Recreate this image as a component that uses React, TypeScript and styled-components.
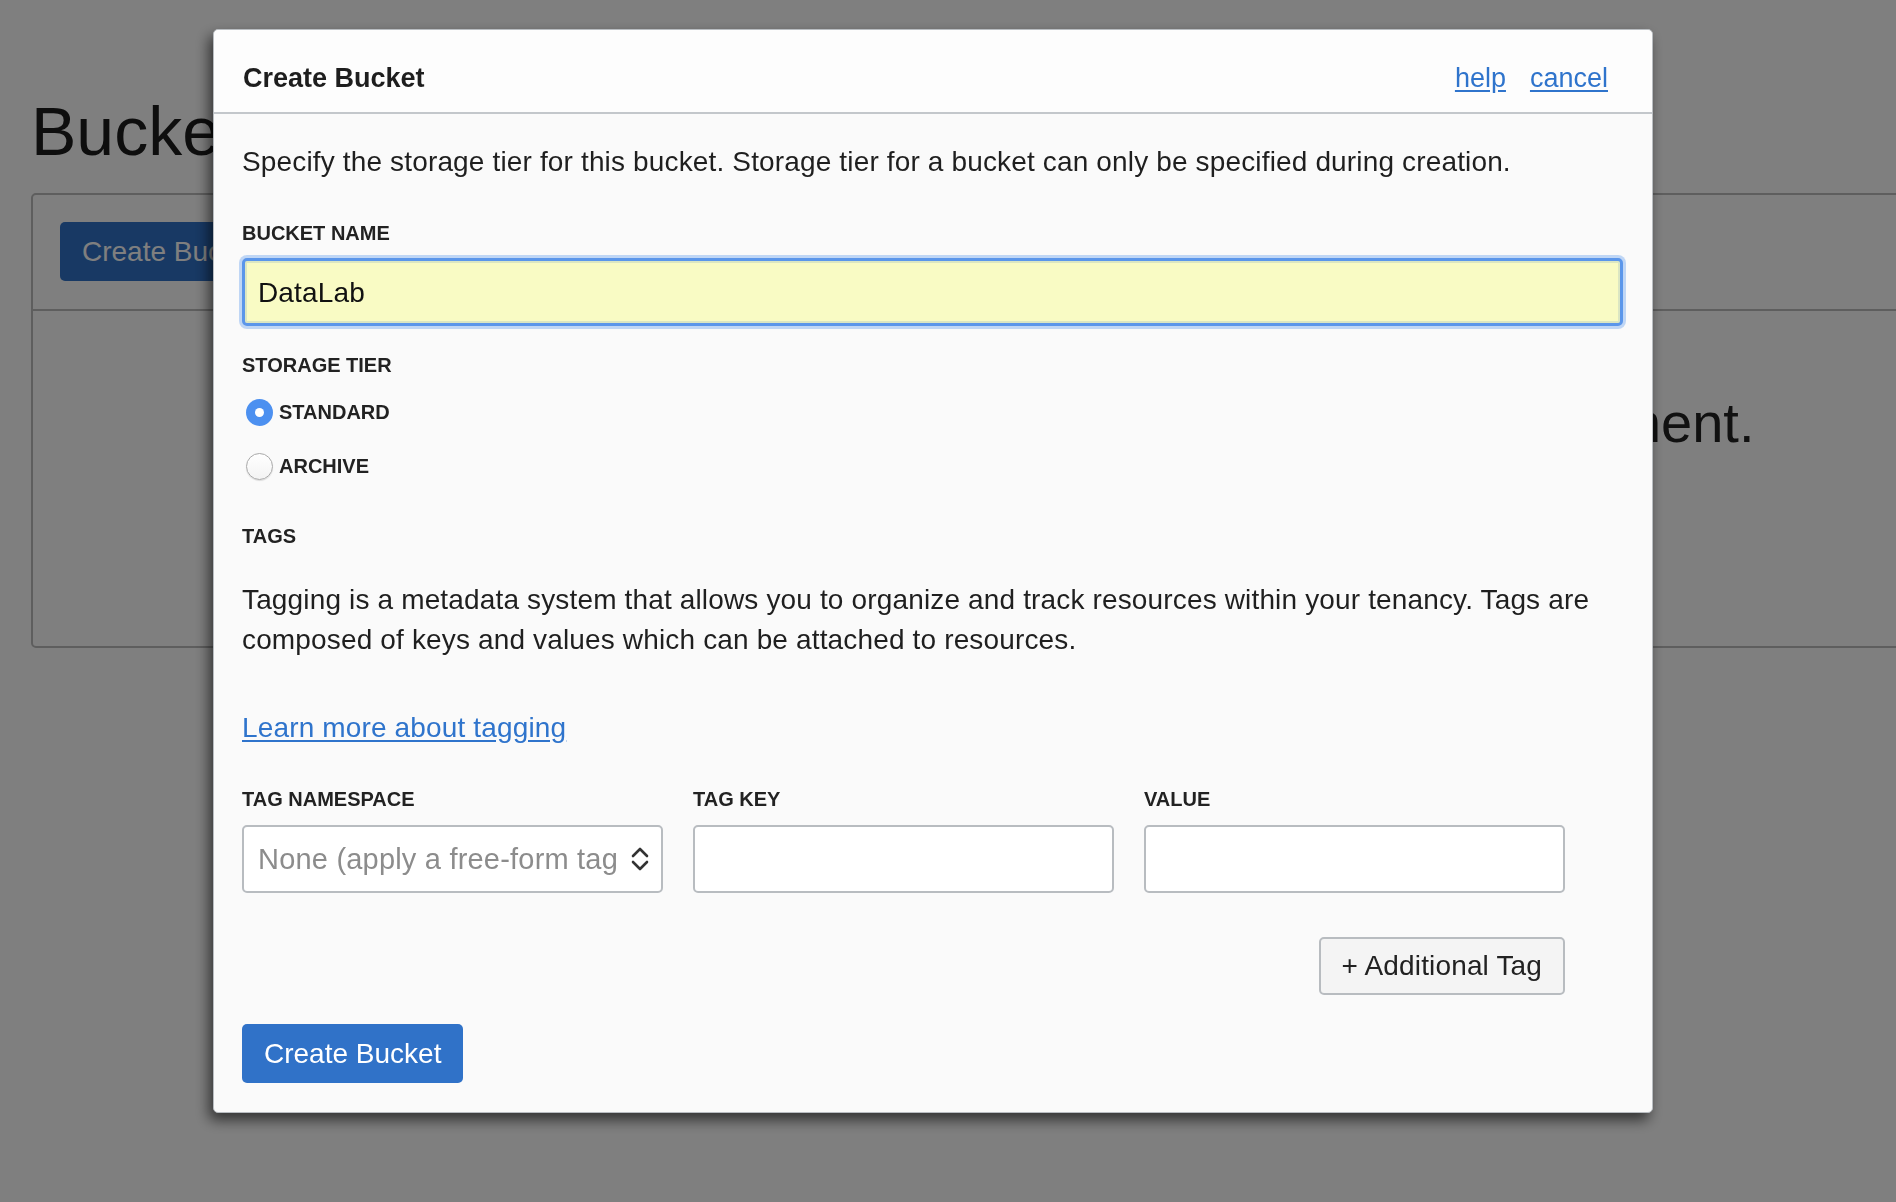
import React from "react";
import styled, { createGlobalStyle } from "styled-components";

const GlobalStyle = createGlobalStyle`
  html, body { margin: 0; padding: 0; }
  body {
    font-family: "Liberation Sans", Arial, Helvetica, sans-serif;
    background: #ffffff;
    color: #222222;
  }
  * { box-sizing: border-box; }
`;

const Page = styled.div`
  width: 1896px;
  height: 1202px;
  overflow: hidden;
  padding-left: 31px;
`;

const PageTitle = styled.h1`
  margin: 94px 0 24px;
  font-size: 68px;
  line-height: 75px;
  font-weight: 400;
  color: #1c1c1c;
`;

const Card = styled.div`
  width: 2398px;
  border: 2px solid #bcbcbc;
  border-radius: 5px;
`;

const CardToolbar = styled.div`
  padding: 27px 27px 28px;
  border-bottom: 2px solid #bcbcbc;
`;

const CardBody = styled.div`
  height: 335px;
  padding-top: 72px;
  text-align: center;
  font-size: 56px;
  line-height: 80px;
  color: #222;
`;

const Overlay = styled.div`
  position: fixed;
  inset: 0;
  background: rgba(0, 0, 0, 0.5);
`;

const Modal = styled.div`
  position: fixed;
  top: 29px;
  left: 213px;
  width: 1440px;
  background: #fafafa;
  border: 1px solid #b9bdc1;
  border-radius: 5px;
  box-shadow: -4px 7px 14px rgba(0, 0, 0, 0.6);
`;

const ModalHeader = styled.div`
  display: flex;
  align-items: center;
  justify-content: space-between;
  padding: 28px 44px 14px 29px;
  border-bottom: 2px solid #c3c7cb;
  background: #fdfdfd;
  border-radius: 5px 5px 0 0;
`;

const ModalTitle = styled.h2`
  margin: 0;
  font-size: 27px;
  line-height: 40px;
  font-weight: 700;
  color: #1e1e1e;
`;

const HeaderLinks = styled.div`
  display: flex;
  gap: 24px;
`;

const Link = styled.a<{ $size?: number }>`
  font-size: ${(p) => p.$size ?? 28}px;
  line-height: 40px;
  color: #2f74cc;
  text-decoration: underline;
  text-underline-offset: 3px;
  cursor: pointer;
`;

const ModalBody = styled.div`
  display: flex;
  flex-direction: column;
  align-items: flex-start;
  padding: 28px 29px 29px 28px;
`;

const Paragraph = styled.p<{ $mt?: number }>`
  margin: ${(p) => p.$mt ?? 0}px 0 0;
  font-size: 28px;
  line-height: 40px;
  letter-spacing: 0.15px;
  color: #1f1f1f;
`;

const FieldLabel = styled.div<{ $mt?: number }>`
  margin-top: ${(p) => p.$mt ?? 0}px;
  font-size: 20px;
  line-height: 28px;
  font-weight: 700;
  color: #222;
  text-transform: uppercase;
`;

const NameInput = styled.div`
  margin-top: 11px;
  align-self: stretch;
  height: 68px;
  display: flex;
  align-items: center;
  padding: 2px 13px 0;
  background: #f9fbc4;
  border: 3px solid #5b96ea;
  border-radius: 5px;
  box-shadow: 0 0 0 3px rgba(120, 170, 240, 0.45), inset 0 0 0 2px #dbe6c2;
  font-size: 28px;
  letter-spacing: 0.15px;
  color: #111;
`;

const RadioGroup = styled.div`
  margin-top: 13px;
  display: flex;
  flex-direction: column;
  gap: 14px;
`;

const RadioRow = styled.label`
  display: flex;
  align-items: center;
  gap: 6px;
  height: 40px;
  padding-left: 4px;
  font-size: 20px;
  font-weight: 700;
  color: #222;
`;

const RadioCircle = styled.span<{ $checked?: boolean }>`
  width: 27px;
  height: 27px;
  border-radius: 50%;
  display: flex;
  align-items: center;
  justify-content: center;
  background: ${(p) => (p.$checked ? "#4c90f0" : "linear-gradient(#ffffff, #f3f3f3)")};
  border: ${(p) => (p.$checked ? "none" : "1px solid #a9a9a9")};
  box-shadow: ${(p) => (p.$checked ? "none" : "0 1px 1px rgba(0,0,0,0.12)")};
  &::after {
    content: "";
    display: ${(p) => (p.$checked ? "block" : "none")};
    width: 9px;
    height: 9px;
    border-radius: 50%;
    background: #fff;
  }
`;

const TagArea = styled.div`
  display: flex;
  flex-direction: column;
  align-items: flex-end;
  width: 1323px;
  margin-top: 37px;
`;

const TagGrid = styled.div`
  display: grid;
  grid-template-columns: repeat(3, 421px);
  column-gap: 30px;
  row-gap: 12px;
  width: 100%;
`;

const TagInput = styled.div`
  height: 68px;
  display: flex;
  align-items: center;
  padding: 0 12px 0 14px;
  background: #ffffff;
  border: 2px solid #b8bcc0;
  border-radius: 5px;
`;

const SelectText = styled.span`
  flex: 1;
  overflow: hidden;
  white-space: nowrap;
  font-size: 29px;
  letter-spacing: 0.2px;
  color: #8c8c8c;
`;

const SelectArrows = styled.svg`
  flex: none;
  margin-left: 14px;
`;

const SecondaryButton = styled.button`
  margin-top: 44px;
  height: 58px;
  padding: 0 21px;
  background: #f4f4f4;
  border: 2px solid #b8bcc0;
  border-radius: 5px;
  font-family: inherit;
  font-size: 28px;
  letter-spacing: 0.15px;
  color: #222;
`;

const PrimaryButton = styled.button`
  height: 59px;
  padding: 0 22px;
  background: #3072c8;
  border: none;
  border-radius: 5px;
  font-family: inherit;
  font-size: 28px;
  color: #ffffff;
`;

const SubmitRow = styled.div`
  margin-top: 29px;
`;

export default function App() {
  return (
    <>
      <GlobalStyle />
      <Page>
        <PageTitle>Buckets</PageTitle>
        <Card>
          <CardToolbar>
            <PrimaryButton>Create Bucket</PrimaryButton>
          </CardToolbar>
          <CardBody>There are no buckets in this compartment.</CardBody>
        </Card>
      </Page>
      <Overlay />
      <Modal>
        <ModalHeader>
          <ModalTitle>Create Bucket</ModalTitle>
          <HeaderLinks>
            <Link $size={27}>help</Link>
            <Link $size={27}>cancel</Link>
          </HeaderLinks>
        </ModalHeader>
        <ModalBody>
          <Paragraph>
            Specify the storage tier for this bucket. Storage tier for a bucket can only be specified during creation.
          </Paragraph>
          <FieldLabel $mt={37}>Bucket Name</FieldLabel>
          <NameInput>DataLab</NameInput>
          <FieldLabel $mt={25}>Storage Tier</FieldLabel>
          <RadioGroup>
            <RadioRow>
              <RadioCircle $checked />
              STANDARD
            </RadioRow>
            <RadioRow>
              <RadioCircle />
              ARCHIVE
            </RadioRow>
          </RadioGroup>
          <FieldLabel $mt={36}>Tags</FieldLabel>
          <Paragraph $mt={30}>
            Tagging is a metadata system that allows you to organize and track resources within your tenancy. Tags are
            composed of keys and values which can be attached to resources.
          </Paragraph>
          <Paragraph $mt={48}>
            <Link>Learn more about tagging</Link>
          </Paragraph>
          <TagArea>
            <TagGrid>
              <FieldLabel>Tag Namespace</FieldLabel>
              <FieldLabel>Tag Key</FieldLabel>
              <FieldLabel>Value</FieldLabel>
              <TagInput>
                <SelectText>None (apply a free-form tag)</SelectText>
                <SelectArrows width="18" height="28" viewBox="0 0 18 28">
                  <path d="M2 11 L9 4 L16 11" fill="none" stroke="#333" strokeWidth="2.6" strokeLinecap="round" strokeLinejoin="round" />
                  <path d="M2 17 L9 24 L16 17" fill="none" stroke="#333" strokeWidth="2.6" strokeLinecap="round" strokeLinejoin="round" />
                </SelectArrows>
              </TagInput>
              <TagInput />
              <TagInput />
            </TagGrid>
            <SecondaryButton>+ Additional Tag</SecondaryButton>
          </TagArea>
          <SubmitRow>
            <PrimaryButton>Create Bucket</PrimaryButton>
          </SubmitRow>
        </ModalBody>
      </Modal>
    </>
  );
}
